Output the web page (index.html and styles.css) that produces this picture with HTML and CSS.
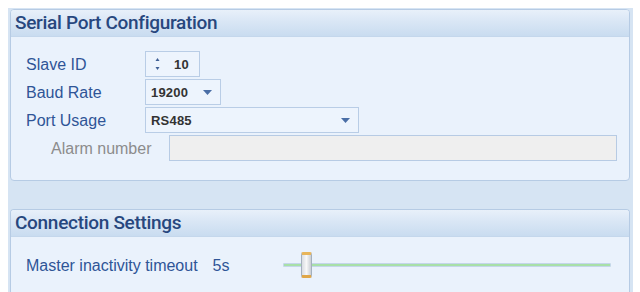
FILE: index.html
```html
<!DOCTYPE html>
<html>
<head>
<meta charset="utf-8">
<link rel="stylesheet" href="styles.css">
</head>
<body>
<div class="panel">
  <section class="group group-serial">
    <div class="group-header">Serial Port Configuration</div>
    <div class="group-body">
      <div class="row">
        <span class="label">Slave ID</span>
        <div class="ctrl spinner">
          <span class="spin-arrows">
            <svg width="5" height="14" viewBox="0 0 5 14"><path d="M2.5 1 L4.5 4 L0.5 4 Z" fill="#3f5f95"/><path d="M0.5 10 L4.5 10 L2.5 13 Z" fill="#3f5f95"/></svg>
          </span>
          <span class="value">10</span>
        </div>
      </div>
      <div class="row">
        <span class="label">Baud Rate</span>
        <div class="ctrl combo combo-baud">
          <span class="value">19200</span>
          <svg class="drop" width="9" height="5" viewBox="0 0 9 5"><path d="M0 0 H9 L4.5 5 Z" fill="#4a6ea6"/></svg>
        </div>
      </div>
      <div class="row">
        <span class="label">Port Usage</span>
        <div class="ctrl combo combo-port">
          <span class="value">RS485</span>
          <svg class="drop" width="9" height="5" viewBox="0 0 9 5"><path d="M0 0 H9 L4.5 5 Z" fill="#4a6ea6"/></svg>
        </div>
      </div>
      <div class="row row-sub">
        <span class="label label-disabled">Alarm number</span>
        <div class="ctrl textbox-disabled"></div>
      </div>
    </div>
  </section>
  <section class="group group-conn">
    <div class="group-header">Connection Settings</div>
    <div class="group-body conn-body">
      <span class="label label-auto">Master inactivity timeout</span>
      <span class="label slider-value">5s</span>
      <div class="slider">
        <div class="track"></div>
        <div class="thumb"></div>
      </div>
    </div>
  </section>
</div>
</body>
</html>
```
FILE: styles.css
```css
html, body {
  margin: 0;
  padding: 0;
  background: #ffffff;
  width: 640px;
  height: 292px;
  overflow: hidden;
}

.panel {
  margin: 8px 0 0 8px;
  width: 625px;
  height: 284px;
  background: #d6e4f3;
  padding: 1px 0 0 2px;
  box-sizing: border-box;
  display: flex;
  flex-direction: column;
  gap: 28px;
}

.group {
  width: 620px;
  box-sizing: border-box;
  border: 1px solid #b6cbe4;
  border-radius: 4px;
  background: #eaf2fc;
  overflow: hidden;
}

.group-serial {
  height: 172px;
}

.group-conn {
  flex: 1;
  border-bottom: none;
  border-radius: 4px 4px 0 0;
}

.group-header {
  height: 27px;
  box-sizing: border-box;
  padding: 2px 0 0 4px;
  background: linear-gradient(to bottom, #e8f0fa 0%, #d9e6f5 45%, #c9dcf0 100%);
  border-bottom: 1px solid #c4d7ec;
  font-family: Roboto, "Open Sans", sans-serif;
  font-weight: 500;
  font-size: 19px;
  line-height: 22px;
  color: #27477e;
  letter-spacing: -0.3px;
}

.group-body {
  padding: 14px 0 0 15px;
  display: flex;
  flex-direction: column;
  gap: 2px;
}

.row {
  display: flex;
  align-items: center;
  height: 26px;
}

.row-sub {
  padding-left: 25px;
}

.label {
  width: 119px;
  font-family: "Liberation Sans", Arial, sans-serif;
  font-size: 16px;
  color: #2f5597;
  padding-top: 2px;
}

.label-disabled {
  width: 118px;
  color: #8c8c8c;
}

.ctrl {
  box-sizing: border-box;
  height: 26px;
  border: 1px solid #b9cde6;
  background: #edf4fd;
  display: flex;
  align-items: center;
}

.value {
  font-family: "Liberation Sans", Arial, sans-serif;
  font-weight: bold;
  font-size: 13px;
  color: #333333;
  letter-spacing: 0.2px;
}

.spinner {
  width: 55px;
  padding-left: 9px;
}

.spin-arrows {
  display: flex;
  width: 19px;
}

.combo {
  justify-content: space-between;
  padding: 0 8px 0 5px;
}

.combo-baud {
  width: 76px;
}

.combo-port {
  width: 214px;
}

.drop {
  margin-top: 1px;
}

.textbox-disabled {
  width: 448px;
  background: #efefef;
  border-color: #b7cbe4;
}

.conn-body {
  flex-direction: row;
  align-items: center;
  padding-top: 14px;
}

.label-auto {
  width: auto;
}

.slider-value {
  width: auto;
  margin-left: 13px;
}

.slider {
  position: relative;
  margin-left: auto;
  margin-right: 18px;
  width: 328px;
  height: 28px;
  display: flex;
  align-items: center;
}

.track {
  width: 100%;
  height: 4px;
  box-sizing: border-box;
  border: 1px solid #c4d6ea;
  background: #a8e0a8;
  border-radius: 1px;
}

.thumb {
  position: absolute;
  left: 18px;
  top: 1px;
  width: 11px;
  height: 26px;
  box-sizing: border-box;
  border: 1px solid #a4b0bd;
  border-top: 3px solid #e8b55a;
  border-bottom: 3px solid #e0a748;
  border-radius: 2px;
  background: linear-gradient(to right, #d9dde2, #f8f8f8 50%, #c9ced4);
}
```
